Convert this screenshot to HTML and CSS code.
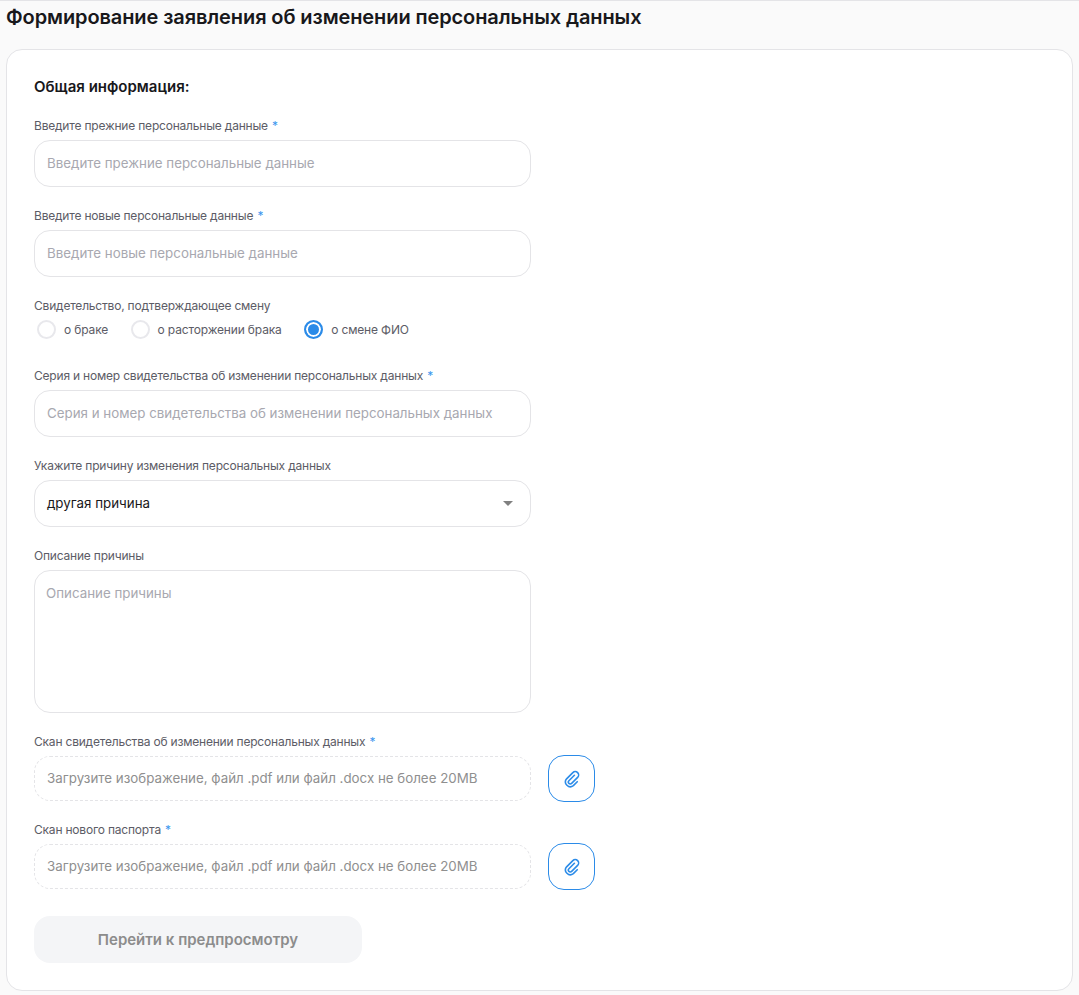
FILE: index.html
```html
<!doctype html>
<html lang="ru">
<head>
  <title>Формирование заявления</title>
  <meta charset="utf-8">
  <meta name="viewport" content="width=device-width, initial-scale=1">
  <link rel="stylesheet" href="styles.css">
</head>
<body>
  <h1 class="page-title">Формирование заявления об изменении персональных данных</h1>
  <form class="card">
    <h2 class="section-title">Общая информация:</h2>

    <div class="field">
      <label class="field-label">Введите прежние персональные данные <span class="req">*</span></label>
      <input class="text-input" type="text" placeholder="Введите прежние персональные данные">
    </div>

    <div class="field">
      <label class="field-label">Введите новые персональные данные <span class="req">*</span></label>
      <input class="text-input" type="text" placeholder="Введите новые персональные данные">
    </div>

    <div class="field field-radios">
      <label class="field-label">Свидетельство, подтверждающее смену</label>
      <div class="radio-row">
        <span class="radio-item"><span class="radio"></span>о браке</span>
        <span class="radio-item"><span class="radio"></span>о расторжении брака</span>
        <span class="radio-item"><span class="radio radio-on"></span>о смене ФИО</span>
      </div>
    </div>

    <div class="field">
      <label class="field-label">Серия и номер свидетельства об изменении персональных данных <span class="req">*</span></label>
      <input class="text-input" type="text" placeholder="Серия и номер свидетельства об изменении персональных данных">
    </div>

    <div class="field">
      <label class="field-label">Укажите причину изменения персональных данных</label>
      <div class="select-box">
        <span>другая причина</span>
        <span class="select-arrow"></span>
      </div>
    </div>

    <div class="field">
      <label class="field-label">Описание причины</label>
      <textarea class="text-area" placeholder="Описание причины"></textarea>
    </div>

    <div class="field field-file">
      <label class="field-label">Скан свидетельства об изменении персональных данных <span class="req">*</span></label>
      <div class="file-row">
        <div class="file-box">Загрузите изображение, файл .pdf или файл .docx не более 20MB</div>
        <button class="file-btn" type="button">
          <svg width="18" height="18" viewBox="0 0 24 24" fill="none" stroke="#2b8be8" stroke-width="2.1" stroke-linecap="round" stroke-linejoin="round"><path d="M15.2 7 7.9 14.3a2.5 2.5 0 0 0 3.6 3.6l8-8a4.5 4.5 0 0 0-6.4-6.4l-8.3 8.3a6.4 6.4 0 0 0 9 9l5.2-5.2"/></svg>
        </button>
      </div>
    </div>

    <div class="field field-file">
      <label class="field-label">Скан нового паспорта <span class="req">*</span></label>
      <div class="file-row">
        <div class="file-box">Загрузите изображение, файл .pdf или файл .docx не более 20MB</div>
        <button class="file-btn" type="button">
          <svg width="18" height="18" viewBox="0 0 24 24" fill="none" stroke="#2b8be8" stroke-width="2.1" stroke-linecap="round" stroke-linejoin="round"><path d="M15.2 7 7.9 14.3a2.5 2.5 0 0 0 3.6 3.6l8-8a4.5 4.5 0 0 0-6.4-6.4l-8.3 8.3a6.4 6.4 0 0 0 9 9l5.2-5.2"/></svg>
        </button>
      </div>
    </div>

    <button class="submit-btn" type="button">Перейти к предпросмотру</button>
  </form>
</body>
</html>
```

FILE: styles.css
```css
* {
  box-sizing: border-box;
}

html, body {
  height: 995px;
  overflow: hidden;
}

body {
  margin: 0;
  padding: 0 6px;
  background-color: #fafafa;
  border-top: 1px solid #e4e4e7;
  font-family: Inter, "Liberation Sans", sans-serif;
  color: #18181b;
}

.page-title {
  margin: 0;
  height: 48px;
  padding-top: 4px;
  font-size: 20px;
  line-height: 24px;
  font-weight: 600;
  letter-spacing: -0.1px;
}

.card {
  width: 1067px;
  height: 942px;
  padding: 27px 27px 0;
  background-color: #ffffff;
  border: 1px solid #e4e4e7;
  border-radius: 16px;
}

.section-title {
  margin: 0 0 21px;
  font-size: 15px;
  line-height: 20px;
  font-weight: 600;
}

.field {
  width: 561px;
  margin-bottom: 21px;
}

.field-label {
  display: block;
  margin-bottom: 6px;
  font-size: 12px;
  line-height: 16px;
  letter-spacing: -0.2px;
  color: #5c5c66;
}

.req {
  margin-left: 1px;
  color: #3b96ee;
}

.text-input,
.select-box,
.text-area {
  display: block;
  width: 497px;
  border: 1px solid #e4e4e7;
  border-radius: 16px;
  background-color: #ffffff;
  font-family: inherit;
  font-size: 13.33px;
  outline: none;
}

.text-input {
  height: 47px;
  padding: 0 12px 2px;
}

.text-input::placeholder,
.text-area::placeholder {
  color: #a8a8b0;
  opacity: 1;
}

.select-box {
  height: 47px;
  padding: 0 17px 2px 12px;
  display: flex;
  align-items: center;
  justify-content: space-between;
  color: #18181b;
}

.select-arrow {
  width: 0;
  height: 0;
  margin-top: 2px;
  border-left: 5px solid transparent;
  border-right: 5px solid transparent;
  border-top: 5px solid #808080;
}

.text-area {
  height: 143px;
  padding: 13px 11px;
  resize: none;
  line-height: 18px;
}

.field-radios {
  margin-bottom: 24.4px;
}

.field-radios .field-label {
  margin-bottom: 0;
}

.radio-row {
  display: flex;
  align-items: center;
  gap: 22.5px;
  height: 30px;
  padding-left: 3px;
  font-size: 12px;
  letter-spacing: -0.15px;
  color: #5c5c66;
}

.radio-item {
  display: flex;
  align-items: center;
  gap: 8px;
}

.radio {
  width: 19px;
  height: 19px;
  border: 2px solid #e8e8ec;
  border-radius: 50%;
  background-color: #ffffff;
}

.radio-on {
  border-color: #2b8be8;
  box-shadow: inset 0 0 0 2px #ffffff;
  background-color: #2b8be8;
}

.field-file {
  margin-bottom: 20px;
}

.field-file .field-label {
  margin-bottom: 5px;
}

.file-row {
  display: flex;
  align-items: center;
  gap: 17px;
}

.file-box {
  width: 497px;
  height: 45px;
  padding: 0 12px 2px;
  display: flex;
  align-items: center;
  border: 1px dashed #e4e4e7;
  border-radius: 16px;
  font-size: 13.33px;
  color: #8f8f8f;
}

.file-btn {
  display: flex;
  align-items: center;
  justify-content: center;
  width: 47px;
  height: 47px;
  padding: 0;
  background-color: #ffffff;
  border: 1px solid #2b8be8;
  border-radius: 16px;
}

.submit-btn {
  display: block;
  width: 328px;
  height: 47px;
  margin-top: 26px;
  border: none;
  border-radius: 16px;
  background-color: #f4f5f7;
  font-family: inherit;
  font-size: 15px;
  font-weight: 600;
  color: #8c8c8c;
}
```
